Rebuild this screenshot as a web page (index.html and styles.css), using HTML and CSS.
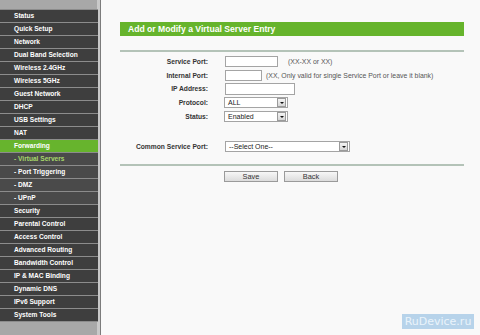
FILE: index.html
```html
<!DOCTYPE html>
<html lang="en">
<head>
  <meta charset="UTF-8" />
  <title>Virtual Servers</title>
  <link rel="stylesheet" href="styles.css">
</head>
<body>

<aside class="menu">
  <a href="#">Status</a>
  <a href="#">Quick Setup</a>
  <a href="#">Network</a>
  <a href="#">Dual Band Selection</a>
  <a href="#">Wireless 2.4GHz</a>
  <a href="#">Wireless 5GHz</a>
  <a href="#">Guest Network</a>
  <a href="#">DHCP</a>
  <a href="#">USB Settings</a>
  <a href="#">NAT</a>
  <a href="#" class="active">Forwarding</a>
  <a href="#" class="sub current">- Virtual Servers</a>
  <a href="#" class="sub">- Port Triggering</a>
  <a href="#" class="sub">- DMZ</a>
  <a href="#" class="sub">- UPnP</a>
  <a href="#">Security</a>
  <a href="#">Parental Control</a>
  <a href="#">Access Control</a>
  <a href="#">Advanced Routing</a>
  <a href="#">Bandwidth Control</a>
  <a href="#">IP &amp; MAC Binding</a>
  <a href="#">Dynamic DNS</a>
  <a href="#">IPv6 Support</a>
  <a href="#">System Tools</a>
</aside>

<main class="content">
  <h2 class="title">Add or Modify a Virtual Server Entry</h2>
  <hr class="rule">

  <div class="form">
    <label>Service Port:</label>
    <div class="field"><input type="text" class="w52"><span class="hint wide">(XX-XX or XX)</span></div>

    <label>Internal Port:</label>
    <div class="field"><input type="text" class="w37"><span class="hint">(XX, Only valid for single Service Port or leave it blank)</span></div>

    <label>IP Address:</label>
    <div class="field"><input type="text" class="w70 tall"></div>

    <label>Protocol:</label>
    <div class="field"><div class="select w64"><span>ALL</span><i class="arrow"></i></div></div>

    <label>Status:</label>
    <div class="field"><div class="select w64"><span>Enabled</span><i class="arrow"></i></div></div>
  </div>

  <div class="form common">
    <label>Common Service Port:</label>
    <div class="field"><div class="select w125"><span>--Select One--</span><i class="arrow"></i></div></div>
  </div>

  <hr class="rule low">

  <div class="buttons">
    <button>Save</button>
    <button>Back</button>
  </div>
</main>

<div class="mark">RuDevice.ru</div>

</body>
</html>
```

FILE: styles.css
```css
* {
  margin: 0;
  padding: 0;
  box-sizing: border-box;
}

body {
  display: flex;
  height: 335px;
  overflow: hidden;
  font-family: 'Liberation Sans', Arial, sans-serif;
  font-size: 7px;
  background-color: #f9f9f9;
}

.menu {
  width: 101px;
  flex: 0 0 101px;
  padding-top: 9px;
  background-color: #a8a8a8;
  border-right: 1px solid #7c7c7c;
  box-shadow: inset -3px 0 0 #c9c9c9;
  display: flex;
  flex-direction: column;
}

.menu a {
  display: block;
  width: 98px;
  height: 13px;
  line-height: 12px;
  padding-left: 14px;
  color: #fff;
  font-size: 6.6px;
  font-weight: bold;
  text-decoration: none;
  background-color: #3e3e3e;
  border-top: 1px solid #8c8c8c;
  white-space: nowrap;
}

.menu a:last-child {
  border-bottom: 1px solid #8c8c8c;
  height: 14px;
}

.menu a.active {
  background-color: #67b42d;
}

.menu a.sub {
  background-color: #4a4a4a;
}

.menu a.current {
  color: #a6d86a;
}

.content {
  flex: 1;
  padding: 22px 16px 0 19px;
}

.title {
  width: 344px;
  height: 14px;
  line-height: 14px;
  padding-left: 8px;
  background-color: #66b42c;
  color: #fff;
  font-size: 8.6px;
  font-weight: bold;
}

.rule {
  width: 344px;
  height: 0;
  border: none;
  border-top: 2px solid #b4c3b8;
  margin-top: 14px;
}

.form {
  display: grid;
  grid-template-columns: 88px 1fr;
  column-gap: 17px;
  grid-auto-rows: 13.6px;
  align-items: center;
  margin-top: 3px;
}

.form label {
  text-align: right;
  font-size: 6.7px;
  font-weight: bold;
  color: #333;
  white-space: nowrap;
}

.form.common {
  margin-top: 17px;
}

.field {
  display: flex;
  align-items: center;
  gap: 4px;
}

input {
  height: 11px;
  border: 1px solid #a4a4a4;
  background-color: #fff;
}

input.tall {
  height: 12px;
}

.hint {
  color: #555;
  font-size: 6.9px;
  white-space: nowrap;
}

.hint.wide {
  margin-left: 6px;
}

.w37 { width: 37px; }
.w52 { width: 53px; }
.w70 { width: 70px; }
.w64 { width: 64px; margin-left: -1px; }
.w125 { width: 125px; }

.select {
  display: flex;
  justify-content: space-between;
  align-items: center;
  height: 11px;
  padding: 0 1px 0 3px;
  border: 1px solid #a4a4a4;
  background-color: #fff;
  color: #222;
  font-size: 7px;
}

.arrow {
  position: relative;
  width: 9px;
  height: 9px;
  border: 1px solid #9a9a9a;
  background: linear-gradient(#f4f4f4, #d6d6d6);
}

.arrow::after {
  content: "";
  position: absolute;
  left: 2px;
  top: 3px;
  border-left: 2px solid transparent;
  border-right: 2px solid transparent;
  border-top: 2px solid #111;
}

.rule.low {
  margin-top: 10px;
}

.buttons {
  display: flex;
  gap: 6px;
  margin-top: 5px;
  padding-left: 104px;
}

.buttons button {
  width: 54px;
  height: 11px;
  font-family: 'Liberation Sans', Arial, sans-serif;
  font-size: 7.4px;
  line-height: 9px;
  color: #333;
  border: 1px solid #9a9a9a;
  background: linear-gradient(#f7f7f7, #dcdcdc);
}

.mark {
  position: absolute;
  left: 402px;
  top: 314px;
  width: 72px;
  height: 15px;
  line-height: 15px;
  text-align: center;
  background-color: #b7d3ea;
  color: #eaf3fb;
  font-family: 'DejaVu Sans', sans-serif;
  font-size: 11px;
}
```
